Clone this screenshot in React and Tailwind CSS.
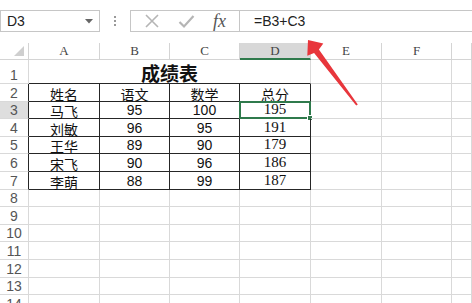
import React from "react";

const colW = ["w-[71px]", "w-[70px]", "w-[70px]", "w-[71px]", "w-[71px]", "w-[70px]", "flex-1"];
const colNames = ["A", "B", "C", "D", "E", "F", ""];

const rows = [
  ["姓名", "语文", "数学", "总分"],
  ["马飞", "95", "100", "195"],
  ["刘敏", "96", "95", "191"],
  ["王华", "89", "90", "179"],
  ["宋飞", "90", "96", "186"],
  ["李萌", "88", "99", "187"],
];

const cjk = "font-['Noto_Sans_CJK_SC',sans-serif]";
const sans = "font-['Liberation_Sans',Arial,sans-serif]";
const serif = "font-['Liberation_Serif','Noto_Sans_CJK_SC',serif]";

function RowHead({ n, dark, active, tall }) {
  return (
    <div
      className={`w-[29px] shrink-0 flex items-end justify-center border-b border-r border-[#d9d9d9] text-[14px] leading-none pb-[1px] text-[#555] ${sans} ${
        dark ? "border-r-[#262626]" : ""
      } ${active ? "bg-[#dedede]" : "bg-white"} ${tall ? "h-[24px]" : "h-[17.6px]"}`}
    >
      {n}
    </div>
  );
}

function DataRow({ n, cells }) {
  return (
    <div className="flex">
      <RowHead n={n} dark active={n === 3} />
      {colW.map((w, i) => {
        const inTable = i < 4;
        const text = cells[i];
        let font = sans;
        let size = "text-[14px] pb-[1px]";
        if (text && /[\u4e00-\u9fff]/.test(text)) {
          font = cjk;
          size = "text-[14px] pb-0";
        } else if (i === 3) {
          font = serif;
          size = "text-[15px] pb-[1px]";
        }
        return (
          <div
            key={i}
            className={`${w} relative h-[17.6px] flex items-end justify-center border-b border-r border-[#d9d9d9] text-[#111] leading-none ${
              inTable ? "border-r-[#262626] border-b-[#262626]" : ""
            } ${font} ${size}`}
          >
            {text}
            {n === 3 && i === 3 && (
              <div className="absolute left-[-1px] top-[-1px] right-[-1px] bottom-[-1px] border-2 border-[#2f7a4c]">
                <div className="absolute right-[-4px] bottom-[-4px] w-[6px] h-[6px] bg-[#2f7a4c] border border-white" />
              </div>
            )}
          </div>
        );
      })}
    </div>
  );
}

function EmptyRow({ n }) {
  return (
    <div className="flex">
      <RowHead n={n} />
      {colW.map((w, i) => (
        <div key={i} className={`${w} h-[17.6px] border-b border-r border-[#d9d9d9]`} />
      ))}
    </div>
  );
}

export default function App() {
  return (
    <div className="w-[472px] h-[303px] overflow-hidden bg-white relative">
      {/* formula bar */}
      <div className="flex items-center pt-[10px] h-[32px]">
        <div className="w-[100px] h-[22px] border border-[#c6c6c6] flex items-center justify-between pl-[6px] pr-[6px]">
          <span className={`text-[14px] text-[#222] ${sans}`}>D3</span>
          <svg width="8" height="5" viewBox="0 0 8 5">
            <path d="M0 0 L8 0 L4 4.5 Z" fill="#666" />
          </svg>
        </div>
        <div className="w-[30px] flex flex-col items-center gap-[2px]">
          <span className="w-[2px] h-[2px] bg-[#999]" />
          <span className="w-[2px] h-[2px] bg-[#999]" />
          <span className="w-[2px] h-[2px] bg-[#999]" />
        </div>
        <div className="w-[110px] h-[22px] border border-[#c6c6c6] flex items-center justify-around px-[4px]">
          <svg width="16" height="16" viewBox="0 0 16 16">
            <path d="M2 2 L14 14 M14 2 L2 14" stroke="#b5b5b5" strokeWidth="1.6" fill="none" />
          </svg>
          <svg width="17" height="16" viewBox="0 0 17 16">
            <path d="M1.5 9 L6 13.5 L15.5 3" stroke="#b5b5b5" strokeWidth="2.2" fill="none" />
          </svg>
          <span className={`italic text-[18px] text-[#555] leading-none ${serif}`}>fx</span>
        </div>
        <div className="flex-1 h-[22px] border border-l-0 border-r-0 border-[#c6c6c6] flex items-center pl-[14px]">
          <span className={`text-[14px] text-[#222] ${sans}`}>=B3+C3</span>
        </div>
      </div>

      <div className="h-[11px]" />

      {/* column headers */}
      <div className="flex h-[17px]">
        <div className="w-[29px] shrink-0 border-b border-r border-[#d4d4d4] flex items-end justify-end pr-[4px] pb-[3px]">
          <svg width="10" height="10" viewBox="0 0 10 10">
            <path d="M10 0 L10 10 L0 10 Z" fill="#cfcfcf" />
          </svg>
        </div>
        {colW.map((w, i) => (
          <div
            key={i}
            className={`${w} flex items-center justify-center text-[13px] text-[#444] border-r border-[#d4d4d4] ${serif} ${
              i === 3 ? "bg-[#d8d8d8] border-b-2 border-b-[#2f7a4c]" : "border-b"
            }`}
          >
            {colNames[i]}
          </div>
        ))}
      </div>

      {/* row 1 merged title */}
      <div className="flex">
        <RowHead n={1} tall />
        <div className={`w-[282px] h-[24px] flex items-end justify-center border-r border-[#d9d9d9] border-b border-b-[#262626] pb-[1px] text-[19px] font-bold leading-none text-[#111] ${cjk}`}>
          成绩表
        </div>
        {colW.slice(4).map((w, i) => (
          <div key={i} className={`${w} h-[24px] border-b border-r border-[#d9d9d9]`} />
        ))}
      </div>

      {rows.map((cells, i) => (
        <DataRow key={i} n={i + 2} cells={cells} />
      ))}
      {[8, 9, 10, 11, 12, 13, 14].map((n) => (
        <EmptyRow key={n} n={n} />
      ))}

      {/* red arrow annotation */}
      <svg className="absolute left-0 top-0 pointer-events-none" width="472" height="303" viewBox="0 0 472 303">
        <polygon
          points="308,40 323.3,43.6 318.9,49.4 357.8,104.4 356.2,105.6 314.1,53 307.3,55.7"
          fill="#e8363c"
        />
      </svg>
    </div>
  );
}
